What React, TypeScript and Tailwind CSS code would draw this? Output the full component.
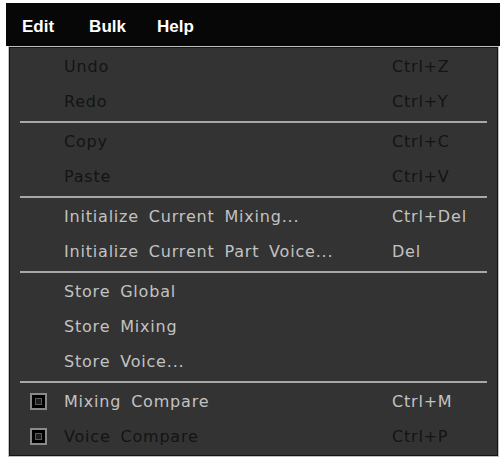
import React from "react";

type Item =
  | { type: "sep" }
  | { type: "item"; label: string; shortcut?: string; disabled?: boolean; check?: boolean };

const items: Item[] = [
  { type: "item", label: "Undo", shortcut: "Ctrl+Z", disabled: true },
  { type: "item", label: "Redo", shortcut: "Ctrl+Y", disabled: true },
  { type: "sep" },
  { type: "item", label: "Copy", shortcut: "Ctrl+C", disabled: true },
  { type: "item", label: "Paste", shortcut: "Ctrl+V", disabled: true },
  { type: "sep" },
  { type: "item", label: "Initialize Current Mixing...", shortcut: "Ctrl+Del" },
  { type: "item", label: "Initialize Current Part Voice...", shortcut: "Del" },
  { type: "sep" },
  { type: "item", label: "Store Global" },
  { type: "item", label: "Store Mixing" },
  { type: "item", label: "Store Voice..." },
  { type: "sep" },
  { type: "item", label: "Mixing Compare", shortcut: "Ctrl+M", check: true },
  { type: "item", label: "Voice Compare", shortcut: "Ctrl+P", check: true, disabled: true },
];

function CheckBox() {
  return (
    <div className="w-[17px] h-[17px] border-2 border-[#8a8a8a] bg-black flex items-center justify-center">
      <div className="w-[7px] h-[7px] border border-[#5c5c5c] bg-[#1e1e1e]" />
    </div>
  );
}

export default function App() {
  return (
    <div className="w-[504px] h-[462px] bg-white overflow-hidden pt-[3px]">
      <div
        className="ml-[6px] w-[494px] h-[43px] bg-[#070707] flex items-center pt-[5px] text-white font-bold text-[17px]"
        style={{ fontFamily: '"Liberation Sans", Arial, sans-serif' }}
      >
        <span className="ml-[16px]">Edit</span>
        <span className="ml-[35px]">Bulk</span>
        <span className="ml-[31px]">Help</span>
      </div>
      <div className="ml-[8px] w-[491px] border border-[#c0c0c0]">
        <div
          className="border border-[#141414] bg-[#333333] pt-[1px] pb-[1px] text-[16px] tracking-[0.8px] [word-spacing:4px]"
          style={{ fontFamily: '"DejaVu Sans", Verdana, sans-serif' }}
        >
          {items.map((it, i) =>
            it.type === "sep" ? (
              <div key={i} className="h-[5px] flex items-center px-[10px]">
                <div className="h-[2px] w-full bg-[#a8a8a8]" />
              </div>
            ) : (
              <div
                key={i}
                className={
                  "h-[35px] flex items-center pl-[20px] " +
                  (it.disabled ? "text-[#141414]" : "text-[#c2c2c2]")
                }
              >
                <div className="w-[34px] flex items-center">{it.check ? <CheckBox /> : null}</div>
                <div className="w-[328px] whitespace-nowrap">{it.label}</div>
                <div className="whitespace-nowrap">{it.shortcut ?? ""}</div>
              </div>
            )
          )}
        </div>
      </div>
    </div>
  );
}
